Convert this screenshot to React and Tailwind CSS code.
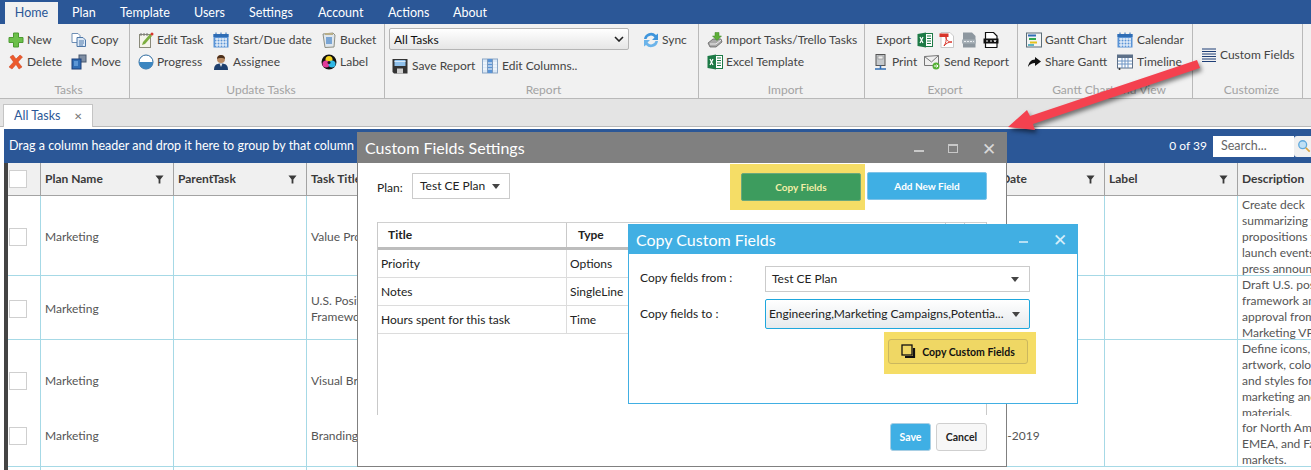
import { useState } from "react";

const font = "font-['Lato','Open_Sans',sans-serif]";

/* ribbon icons, all drawn on a 16x16 box */
const Svg = ({ children, className = "w-4 h-4" }) => (
  <svg viewBox="0 0 16 16" className={className}>{children}</svg>
);
const IconNew = () => <Svg><path d="M5.500 1h5v4.500H15v5h-4.500V15h-5v-4.500H1v-5h4.500z" fill="#6cc04a" stroke="#4d9a33" /></Svg>;
const IconDelete = () => <Svg><path d="M2 3l3-2 3 4 4-4 2.500 2L10 8l4 5-3 2-3-4.500L4 15l-3-2 4.500-5z" fill="#ec5a2c" stroke="#c9401c" strokeWidth=".5" /></Svg>;
const IconCopy = () => <Svg><path d="M1 1.500h6l2 2v7H1z" fill="#fff" stroke="#6f8fb5" /><path d="M6 5.500h6l2.500 2.500v6.500H6z" fill="#dbe8f6" stroke="#4f78a8" /><path d="M8 9h5M8 11h5M8 13h4" stroke="#4f78a8" /></Svg>;
const IconMove = () => <Svg><rect x="8" y="1" width="7" height="7" fill="#7f8ea3" stroke="#4b5a70" /><rect x="1" y="5" width="9" height="10" fill="#2f6db5" stroke="#1d3f78" /><rect x="3" y="7" width="4" height="5" fill="#5c97d6" /></Svg>;
const IconEdit = () => <Svg><rect x="1.500" y="2.500" width="11" height="13" fill="#f4f4ea" stroke="#8a8a7a" /><path d="M3 1v3M6 1v3M9 1v3" stroke="#777" /><path d="M4 13l1-3 7-8 2 2-7 8z" fill="#7cae3f" /><circle cx="14" cy="2" r="1.500" fill="#d8352a" /></Svg>;
const IconCalendar = () => (
  <Svg>
    <rect x="0.500" y="2" width="15" height="13.500" fill="#5a94d6" />
    <rect x="0.500" y="2" width="15" height="3" fill="#2f6db5" />
    <path d="M3 0.500v3M8 0.500v3M13 0.500v3" stroke="#2f6db5" />
    <path d="M2 7h12M2 10h12M2 13h12" stroke="#fff" />
    <path d="M4 6v9M7 6v9M10 6v9M13 6v9" stroke="#fff" />
  </Svg>
);
const IconBucket = () => <Svg><path d="M2 2l10-1 2 2-1 12-9 0.500z" fill="#dfe6ec" stroke="#8d8f83" /><rect x="5" y="5" width="6" height="7" fill="#7aa5d4" /><path d="M4 1h8v2H4z" fill="#b8ae88" /></Svg>;
const IconProgress = () => <Svg><circle cx="8" cy="8" r="7" fill="#fff" stroke="#2c6a9f" /><path d="M1 8h14a7 7 0 0 1-14 0z" fill="#3c86c0" /></Svg>;
const IconAssignee = () => <Svg><path d="M1 16c0-4.500 2-6.500 7-6.500s7 2 7 6.500z" fill="#1d3f6e" /><path d="M6.500 9.500h3L8 13z" fill="#e8e8e8" /><circle cx="8" cy="5" r="4" fill="#b98a62" /><path d="M4 5c0-5.500 8-5.500 8 0-2-1.200-6-1.200-8 0z" fill="#4a2f1c" /></Svg>;
const IconLabel = () => (
  <Svg>
    <circle cx="8" cy="8" r="7.500" fill="#111" />
    <circle cx="8" cy="5.500" r="3.500" fill="#f4d31f" />
    <circle cx="5" cy="10" r="3.500" fill="#e23b9a" />
    <circle cx="11" cy="10" r="3.500" fill="#2fb8e6" />
    <circle cx="8" cy="8.500" r="1.500" fill="#1a1a1a" />
  </Svg>
);
const IconSave = () => <Svg><path d="M0.500 1h15v14.500H2l-1.500-1.500z" fill="#333" /><rect x="2.500" y="2" width="11" height="6" fill="#8fc0ea" /><path d="M2.500 3.500h11" stroke="#d7e9f8" /><rect x="5" y="10.500" width="6" height="5" fill="#cfcfcf" /></Svg>;
const IconColumns = () => (
  <Svg>
    <rect x="0.500" y="1" width="15" height="14" fill="#dbe8f6" stroke="#8aa6c6" />
    <rect x="5.500" y="1" width="5" height="14" fill="#5a94d6" />
    <path d="M1 5h14M1 8h14M1 11h14" stroke="#fff" />
    <path d="M5.500 1v14M10.500 1v14" stroke="#7c9abd" />
  </Svg>
);
const IconSync = () => (
  <Svg>
    <path d="M1 7a7 7 0 0 1 12-4l2-1.500V8H9l2.500-2.500A4.500 4.500 0 0 0 3.500 7z" fill="#3f95dc" />
    <path d="M1 7a7 7 0 0 1 12-4l2-1.500V8H9l2.500-2.500A4.500 4.500 0 0 0 3.500 7z" fill="#6cb4ea" transform="rotate(180 8 8)" />
  </Svg>
);
const IconImport = () => <Svg><path d="M1 11l5-4h8l1 3-6 5H3z" fill="#a9a9a9" stroke="#555" strokeWidth=".7" /><path d="M3 12h6l5-4" stroke="#eee" fill="none" /><path d="M8 0.500h4V4h2.500L10 8.500 5.500 4H8z" fill="#5dae38" stroke="#3d8524" strokeWidth=".5" /></Svg>;
const IconExcel = () => (
  <Svg>
    <rect x="7" y="1.500" width="8.500" height="13" fill="#fff" stroke="#1d7a46" />
    <path d="M10 4h4M10 6.500h4M10 9h4M10 11.500h4" stroke="#1d7a46" />
    <path d="M0.500 2L9 0.500v15L0.500 14z" fill="#1d7a46" />
    <path d="M3 5l3 6M6 5l-3 6" stroke="#fff" strokeWidth="1.200" />
  </Svg>
);
const IconPdf = () => <Svg><path d="M2 0.500h9l3.500 3.500v11.500H2z" fill="#fff" stroke="#c9c9c9" /><rect x="0.500" y="1.500" width="9" height="3.500" fill="#d8352a" /><path d="M5 14c2-3 2.500-6 2-9 0 3 2 5 6 5-3 0-6 1-8 4z" fill="none" stroke="#d8352a" /></Svg>;
const IconHtml = () => <Svg><path d="M2 0.500h9l3.500 3.500v11.500H2z" fill="#8d979f" /><path d="M1 7.500h14v4H1z" fill="#a7b0b7" /><path d="M3 9.500h10" stroke="#e9edf0" strokeDasharray="2 1" /></Svg>;
const IconCsv = () => <Svg><path d="M2.500 0.500h8l3.500 3.500v11c0 .5-.5 .5-.5 .5h-11z" fill="#fff" stroke="#111" strokeWidth="1.200" /><path d="M0.500 6.500h15v5H0.500z" fill="#111" /><path d="M3 9h2M7 9h2M11 8l1 2 1-2" stroke="#fff" fill="none" /></Svg>;
const IconPrint = () => <Svg><rect x="3" y="0.500" width="9" height="11" fill="#c5c9cc" stroke="#555" /><rect x="5" y="2" width="5" height="3" fill="#eee" stroke="#777" strokeWidth=".5" /><path d="M7.500 11.500v3M2 15h11" stroke="#2f6db5" strokeWidth="1.500" /></Svg>;
const IconSend = () => <Svg><path d="M0.500 2.500l14 -1v10h-14z" fill="#efefef" stroke="#777" /><path d="M0.500 2.500L7.500 8l7-6.500" fill="none" stroke="#777" /><circle cx="12" cy="12" r="3.500" fill="#55b135" /><path d="M10 12h4M12.500 10.500L14 12l-1.500 1.500" stroke="#fff" fill="none" /></Svg>;
const IconGantt = () => <Svg><rect x="0.500" y="1" width="15" height="14" fill="#f4f4f4" stroke="#5b6d78" /><path d="M2 3.500h8" stroke="#2f6db5" strokeWidth="2" /><path d="M3 7h7" stroke="#2fa84f" strokeWidth="2" /><path d="M4 10.500h7" stroke="#e6c11e" strokeWidth="2" /><path d="M2 13h6" stroke="#2f9fb5" strokeWidth="1.500" /></Svg>;
const IconShare = () => <Svg><path d="M9 3l6 4.500L9 12V9C6 9 4 10 2 13c.5-4 3-7.500 7-7.500z" fill="#111" /></Svg>;
const IconTimeline = () => (
  <Svg>
    <rect x="0.500" y="1" width="15" height="13" fill="#fff" stroke="#5d7088" />
    <rect x="0.500" y="1" width="15" height="3" fill="#5d7088" />
    <path d="M1 7h14M1 10h14M5 4v10M8 4v10M11 4v10" stroke="#6f95c4" />
    <circle cx="2.500" cy="15" r="1" fill="#333" />
  </Svg>
);
const IconFields = () => (
  <Svg>
    <path d="M1 2h14M1 4.500h14M1 7h14M1 9.500h14M1 12h14M1 14.500h14" stroke="#1f3f77" />
  </Svg>
);
const IconFilter = () => (
  <svg viewBox="0 0 10 10" className="w-[9px] h-[9px]"><path d="M0.500 0.500h9L6 5v4.500H4V5z" fill="#3a3a3a" /></svg>
);
const Caret = ({ className = "" }) => (
  <svg viewBox="0 0 8 5" className={`w-[8px] h-[5px] ${className}`}><path d="M0 0h8L4 5z" fill="#444" /></svg>
);
const IconSearch = () => (
  <svg viewBox="0 0 16 16" className="w-[14px] h-[14px]">
    <circle cx="6.500" cy="6.500" r="4.500" fill="#bfe0f5" stroke="#5fa8dc" strokeWidth="1.500" />
    <path d="M10 10l4.500 4.500" stroke="#d9a441" strokeWidth="2" />
  </svg>
);
const IconCopyFields = () => (
  <svg viewBox="0 0 16 16" className="w-[16px] h-[16px]">
    <rect x="1" y="1" width="10" height="10" fill="none" stroke="#111" strokeWidth="1.300" />
    <path d="M13 4v9H4" fill="none" stroke="#111" strokeWidth="2.200" />
  </svg>
);

function Item({ icon, label, gap = "w-[19px]" }) {
  return (
    <div className="flex items-center h-[22px] whitespace-nowrap">
      <div className={`${gap} shrink-0`}>{icon}</div>
      <span>{label}</span>
    </div>
  );
}

function Group({ label, className, children }) {
  return (
    <div className={`${className} shrink-0 h-[74px] flex flex-col border-r border-[#b9b9b9]`}>
      <div className="flex-1 pt-[5px] flex">{children}</div>
      <div className="h-[16px] leading-[16px] text-center text-[#a3a3a3]">{label}</div>
    </div>
  );
}

const menu = [
  ["Plan", "w-[48px] ml-[14px]"],
  ["Template", "w-[74px]"],
  ["Users", "w-[55px]"],
  ["Settings", "w-[69px]"],
  ["Account", "w-[70px]"],
  ["Actions", "w-[65px]"],
  ["About", "w-[50px]"],
];

const columns = ["Plan Name", "ParentTask", "Task Title", "Bucket", "Progress", "Priority", "Assignee", "Due Date", "Label", "Description"];

const rows = [
  {
    height: "h-[80px]", pad: "pt-[2px]", title: "Value Proposition", date: "",
    desc: ["Create deck", "summarizing value", "propositions for", "launch events and", "press announcement"],
  },
  {
    height: "h-[64px]", pad: "pt-[3px]", title: "U.S. Positioning Framework", date: "",
    desc: ["Draft U.S. positioning", "framework and get", "approval from", "Marketing VP"],
  },
  {
    height: "h-[76px]", pad: "pt-[6px]", title: "Visual Brand Elements", date: "", noBorder: true,
    desc: ["Define icons, logo", "artwork, colors", "and styles for", "marketing and sales", "materials."],
  },
  {
    height: "h-[51px]", pad: "pb-[10px]", title: "Branding", date: "06-5-2019",
    desc: ["for North America,", "EMEA, and Far East", "markets."], descPad: "pt-[4px]",
  },
];

function GridRow({ row }) {
  return (
    <div className={`flex ${row.height} ${row.noBorder ? "" : "border-b border-[#a6d9e6]"} text-[#555]`}>
      <div className={`w-[33px] shrink-0 border-r border-[#a6d9e6] flex items-center pl-[1px] ${row.pad}`}>
        <div className="w-[18px] h-[18px] border border-[#cfcfcf] bg-white" />
      </div>
      <div className={`w-[133px] shrink-0 border-r border-[#a6d9e6] flex items-center pl-[4px] ${row.pad}`}>Marketing</div>
      <div className="w-[133px] shrink-0 border-r border-[#a6d9e6]" />
      <div className={`w-[133px] shrink-0 border-r border-[#a6d9e6] flex items-center pl-[4px] leading-[16px] ${row.pad}`}>{row.title}</div>
      <div className="w-[133px] shrink-0 border-r border-[#a6d9e6]" />
      <div className="w-[133px] shrink-0 border-r border-[#a6d9e6]" />
      <div className="w-[133px] shrink-0 border-r border-[#a6d9e6]" />
      <div className="w-[133px] shrink-0 border-r border-[#a6d9e6]" />
      <div className={`w-[133px] shrink-0 border-r border-[#a6d9e6] flex items-center pl-[10px] ${row.pad}`}>{row.date}</div>
      <div className="w-[133px] shrink-0 border-r border-[#a6d9e6]" />
      <div className={`flex-1 overflow-hidden pl-[4px] pt-[1px] leading-[16px] whitespace-nowrap ${row.descPad || ""}`}>
        {row.desc.map((line) => <div key={line}>{line}</div>)}
      </div>
    </div>
  );
}

function CustomFieldsModal() {
  const fields = [["Priority", "Options"], ["Notes", "SingleLine"], ["Hours spent for this task", "Time"]];
  return (
    <div className="absolute left-[357px] top-[132px] w-[650px] h-[335px] bg-white border border-[#808080] text-[#222] flex flex-col">
      <div className="h-[30px] shrink-0 bg-[#808080] text-white flex items-center pl-[7px] pr-[10px]">
        <span className="text-[16px] flex-1 font-normal">Custom Fields Settings</span>
        <span className="w-[10px] h-[2px] bg-[#c8c8c8] mt-[5px]" />
        <span className="w-[10px] h-[9px] border border-[#c8c8c8] border-t-2 ml-[24px]" />
        <span className="text-[#d8d8d8] ml-[24px] text-[17px] leading-none">✕</span>
      </div>
      <div className="flex items-start pl-[19px] pr-[19px] h-[59px]">
        <span className="mt-[17px] w-[35px]">Plan:</span>
        <div className="mt-[10px] w-[98px] h-[26px] border border-[#cbcbcb] flex items-center pl-[7px] pr-[9px] justify-between">
          <span>Test CE Plan</span><Caret />
        </div>
        <div className="flex-1" />
        <div className="mt-[1px] bg-[#f5dd66] h-[46px] w-[135px] flex items-center justify-end pr-[4px]">
          <button className="w-[120px] h-[28px] rounded-[2px] bg-[#3d9c5e] border border-[#6aa87c] text-[#f3efa8] font-bold text-[10px]">Copy Fields</button>
        </div>
        <button className="mt-[9px] ml-[2px] w-[120px] h-[28px] rounded-[2px] bg-[#3fafe4] border border-[#7fc3e8] text-white font-bold text-[10px]">Add New Field</button>
      </div>
      <div className="ml-[19px] mr-[19px] h-[193px] border-l border-r border-[#c9c9c9]">
        <div className="flex h-[28px] border-t border-b-[3px] border-t-[#d0d0d0] border-b-[#bdbdbd] font-bold text-[#222]">
          <div className="w-[189px] border-r border-[#c9c9c9] pl-[10px] flex items-center">Title</div>
          <div className="flex-1 flex items-center pl-[11px]">Type</div>
          <div className="w-[20px] border-x border-[#c9c9c9]" />
          <div className="w-[21px]" />
        </div>
        {fields.map(([title, type]) => (
          <div key={title} className="flex h-[28px] border-b border-[#dcdcdc]">
            <div className="w-[189px] border-r border-[#dcdcdc] pl-[3px] flex items-center">{title}</div>
            <div className="flex-1 flex items-center pl-[3px]">{type}</div>
          </div>
        ))}
      </div>
      <div className="flex justify-end pr-[19px] pt-[8px] gap-[5px] font-bold text-[10.500px]">
        <button className="w-[41px] h-[28px] rounded-[3px] bg-[#3fafe4] border border-[#a9cfe4] text-white">Save</button>
        <button className="w-[51px] h-[28px] rounded-[3px] bg-[#f7f7f7] border border-[#cfcfcf] text-[#222]">Cancel</button>
      </div>
    </div>
  );
}

function CopyFieldsModal() {
  return (
    <div className="absolute left-[628px] top-[224px] w-[450px] h-[180px] bg-white border border-[#41afe3] text-[#222] flex flex-col">
      <div className="h-[29px] shrink-0 bg-[#41afe3] text-white flex items-center pl-[7px] pr-[10px]">
        <span className="text-[16px] flex-1">Copy Custom Fields</span>
        <span className="w-[9px] h-[2px] bg-[#b5dff4] mt-[5px]" />
        <span className="text-[#d4eefa] ml-[25px] text-[17px] leading-none">✕</span>
      </div>
      <div className="flex pl-[11px] mt-[12px] h-[26px] items-center">
        <span className="w-[125px] -mt-[2px]">Copy fields from :</span>
        <div className="w-[265px] h-[26px] border border-[#cbcbcb] flex items-center pl-[6px] pr-[10px] justify-between">
          <span>Test CE Plan</span><Caret />
        </div>
      </div>
      <div className="flex pl-[11px] h-[30px] mt-[7px] items-center">
        <span className="w-[125px]">Copy fields to :</span>
        <div className="w-[265px] h-[30px] rounded-[2px] border border-[#1ea7dd] bg-gradient-to-b from-white to-[#e6eaed] flex items-center pl-[3px] pr-[9px] justify-between">
          <span className="whitespace-nowrap">Engineering,Marketing Campaigns,Potentia...</span><Caret />
        </div>
      </div>
      <div className="flex justify-end pr-[41px] mt-[3px]">
        <div className="w-[152px] h-[42px] bg-[#f5dd66] flex items-start pt-[7px] pl-[4px]">
          <button className="w-[140px] h-[25px] rounded-[3px] bg-[#efd764] border border-[#cbb75e] text-[#111] font-bold text-[10.500px] flex items-center justify-center gap-[5px]">
            <IconCopyFields />Copy Custom Fields
          </button>
        </div>
      </div>
    </div>
  );
}

export default function App() {
  const [active] = useState("Home");

  return (
    <div className={`relative w-[1311px] h-[470px] overflow-hidden bg-white text-[12px] leading-[16px] text-[#444] ${font}`}>
      {/* menu bar */}
      <div className="h-[24px] bg-[#2b5797] flex items-end pl-[5px] text-white text-[12.500px]">
        <div className="w-[53px] h-[22px] bg-[#f1f1f1] text-[#2b5797] flex items-center justify-center">{active}</div>
        {menu.map(([name, cls]) => (
          <div key={name} className={`${cls} h-[22px] flex items-center`}>{name}</div>
        ))}
      </div>

      {/* ribbon */}
      <div className="h-[75px] bg-[#f1f1f1] border-b border-[#b9b9b9] flex">
        <Group label="Tasks" className="w-[130px] pl-[8px]">
          <div className="w-[63px]">
            <Item icon={<IconNew />} label="New" />
            <Item icon={<IconDelete />} label="Delete" />
          </div>
          <div>
            <Item icon={<IconCopy />} label="Copy" gap="w-[20px]" />
            <Item icon={<IconMove />} label="Move" gap="w-[20px]" />
          </div>
        </Group>
        <Group label="Update Tasks" className="w-[255px] pl-[8px]">
          <div className="w-[75px]">
            <Item icon={<IconEdit />} label="Edit Task" />
            <Item icon={<IconProgress />} label="Progress" />
          </div>
          <div className="w-[108px]">
            <Item icon={<IconCalendar />} label="Start/Due date" gap="w-[20px]" />
            <Item icon={<IconAssignee />} label="Assignee" gap="w-[20px]" />
          </div>
          <div>
            <Item icon={<IconBucket />} label="Bucket" />
            <Item icon={<IconLabel />} label="Label" />
          </div>
        </Group>
        <Group label="Report" className="w-[314px] pl-[4px]">
          <div className="w-[240px]">
            <div className="h-[22px] -mt-[1px] rounded-[2px] border border-[#b5b5b5] bg-gradient-to-b from-white to-[#e6e6e6] flex items-center pl-[4px] pr-[4px] justify-between text-[#111]">
              <span className="mt-[1px]">All Tasks</span>
              <svg viewBox="0 0 10 6" className="w-[10px] h-[6px]"><path d="M1 1l4 4 4-4" fill="none" stroke="#222" strokeWidth="1.600" /></svg>
            </div>
            <div className="flex pl-[3px] mt-[5px]">
              <div className="w-[90px]"><Item icon={<IconSave />} label="Save Report" gap="w-[20px]" /></div>
              <Item icon={<IconColumns />} label="Edit Columns.." gap="w-[20px]" />
            </div>
          </div>
          <div className="ml-[14px]"><Item icon={<IconSync />} label="Sync" /></div>
        </Group>
        <Group label="Import" className="w-[166px] pl-[8px]">
          <div>
            <Item icon={<IconImport />} label="Import Tasks/Trello Tasks" />
            <Item icon={<IconExcel />} label="Excel Template" />
          </div>
        </Group>
        <Group label="Export" className="w-[153px] pl-[8px]">
          <div>
            <div className="flex items-center h-[22px] pl-[3px]">
              <span className="w-[41px]">Export</span>
              <div className="flex gap-[6px] items-center">
                <IconExcel /><IconPdf /><IconHtml /><IconCsv />
              </div>
            </div>
            <div className="flex">
              <div className="w-[51px]"><Item icon={<IconPrint />} label="Print" /></div>
              <Item icon={<IconSend />} label="Send Report" gap="w-[20px]" />
            </div>
          </div>
        </Group>
        <Group label="Gantt Chart and View" className="w-[175px] pl-[8px]">
          <div className="w-[91px]">
            <Item icon={<IconGantt />} label="Gantt Chart" />
            <Item icon={<IconShare />} label="Share Gantt" />
          </div>
          <div>
            <Item icon={<IconCalendar />} label="Calendar" gap="w-[20px]" />
            <Item icon={<IconTimeline />} label="Timeline" gap="w-[20px]" />
          </div>
        </Group>
        <Group label="Customize" className="w-[110px] pl-[8px]">
          <div className="mt-[15px]"><Item icon={<IconFields />} label="Custom Fields" /></div>
        </Group>
      </div>

      {/* document tabs */}
      <div className="h-[28px] bg-[#e4e4e4] border-b border-[#b9b9b9] flex items-end pl-[3px]">
        <div className="w-[90px] h-[23px] -mb-[1px] bg-white border border-b-0 border-[#c4c4c4] flex items-center pl-[10px] text-[#2b5797] text-[12.500px]">
          <span className="flex-1">All Tasks</span>
          <span className="text-[#777] text-[10px] pr-[10px]">✕</span>
        </div>
      </div>

      {/* task grid */}
      <div className="pl-[4px] pt-[2px]">
        <div className="h-[34px] bg-[#2b5797] text-white text-[12.500px] flex items-center pl-[5px]">
          <span className="flex-1">Drag a column header and drop it here to group by that column</span>
          <span className="mr-[6px] text-[12px]">0 of 39</span>
          <div className="w-[81px] h-[21px] bg-white text-[#666] flex items-center pl-[8px]">Search...</div>
          <div className="w-[17px] h-[21px] bg-[#f0f0f0] rounded-l-[3px] flex items-center pl-[3px] overflow-hidden"><IconSearch /></div>
        </div>
        <div className="border-l-4 border-[#444]">
          <div className="flex h-[33px] bg-[#f0f0f0] border-b border-[#a3a3a3] font-bold text-[#3a3a3a]">
            <div className="w-[33px] shrink-0 border-r border-[#a3a3a3] flex items-center pl-[1px]">
              <div className="w-[18px] h-[18px] border border-[#cfcfcf] bg-white" />
            </div>
            {columns.map((col) => (
              <div key={col} className={`${col === "Description" ? "flex-1" : "w-[133px] border-r border-[#a3a3a3]"} shrink-0 flex items-center pl-[4px] pr-[9px] justify-between whitespace-nowrap`}>
                <span>{col}</span>
                {col !== "Description" && <IconFilter />}
              </div>
            ))}
          </div>
          {rows.map((row) => <GridRow key={row.title} row={row} />)}
          <div className="flex h-[10px] text-[#555]">
            <div className="w-[33px] border-r border-[#a6d9e6]" />
            <div className="w-[133px] border-r border-[#a6d9e6]" />
            <div className="w-[133px] border-r border-[#a6d9e6]" />
          </div>
        </div>
      </div>

      <CustomFieldsModal />
      <CopyFieldsModal />

      {/* annotation arrow */}
      <svg viewBox="0 0 210 90" className="absolute left-[1000px] top-[55px] w-[210px] h-[90px] drop-shadow-[2px_3px_2px_rgba(0,0,0,0.5)]">
        <path d="M8 72L27 55l3 6 167-56 3 8-167 56 2 6z" fill="#f4414f" />
      </svg>
    </div>
  );
}
